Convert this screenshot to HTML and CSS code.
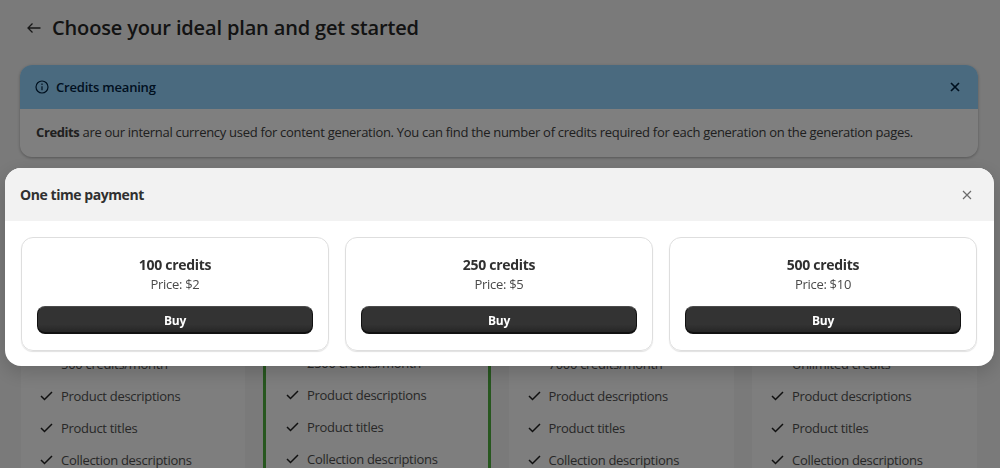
FILE: index.html
```html
<!DOCTYPE html>
<html lang="en">
<head>
<meta charset="utf-8">
<title>Choose your ideal plan</title>
<link rel="stylesheet" href="styles.css">
</head>
<body>
<main class="page">
  <header class="page-head">
    <svg class="back" width="16" height="12" viewBox="0 0 16 12"><path d="M14.5 6H2M6.5 1.5 2 6l4.500 4.500" fill="none" stroke="currentColor" stroke-width="1.300"/></svg>
    <h1>Choose your ideal plan and get started</h1>
  </header>
  <section class="alert">
    <div class="alert-head">
      <svg class="info" width="14" height="14" viewBox="0 0 14 14"><circle cx="7" cy="7" r="6" fill="none" stroke="currentColor" stroke-width="1.200"/><path d="M7 6.200v4M7 3.600v1.300" stroke="currentColor" stroke-width="1.200"/></svg>
      <strong class="alert-title">Credits meaning</strong>
      <svg class="alert-close" width="10" height="10" viewBox="0 0 10 10"><path d="M1 1l8 8M9 1 1 9" stroke="currentColor" stroke-width="1.700"/></svg>
    </div>
    <p class="alert-body"><b>Credits</b> are our internal currency used for content generation. You can find the number of credits required for each generation on the generation pages.</p>
  </section>
  <section class="plans">
    <article class="plan">
      <ul>
        <li><span class="check-slot"></span>500 credits/month</li>
        <li><svg class="check" width="13" height="10" viewBox="0 0 13 10"><path d="M1 5l3.500 3.500L12 1" fill="none" stroke="currentColor" stroke-width="1.500"/></svg>Product descriptions</li>
        <li><svg class="check" width="13" height="10" viewBox="0 0 13 10"><path d="M1 5l3.500 3.500L12 1" fill="none" stroke="currentColor" stroke-width="1.500"/></svg>Product titles</li>
        <li><svg class="check" width="13" height="10" viewBox="0 0 13 10"><path d="M1 5l3.500 3.500L12 1" fill="none" stroke="currentColor" stroke-width="1.500"/></svg>Collection descriptions</li>
      </ul>
    </article>
    <article class="plan plan-featured">
      <ul>
        <li><span class="check-slot"></span>2500 credits/month</li>
        <li><svg class="check" width="13" height="10" viewBox="0 0 13 10"><path d="M1 5l3.500 3.500L12 1" fill="none" stroke="currentColor" stroke-width="1.500"/></svg>Product descriptions</li>
        <li><svg class="check" width="13" height="10" viewBox="0 0 13 10"><path d="M1 5l3.500 3.500L12 1" fill="none" stroke="currentColor" stroke-width="1.500"/></svg>Product titles</li>
        <li><svg class="check" width="13" height="10" viewBox="0 0 13 10"><path d="M1 5l3.500 3.500L12 1" fill="none" stroke="currentColor" stroke-width="1.500"/></svg>Collection descriptions</li>
      </ul>
    </article>
    <article class="plan">
      <ul>
        <li><span class="check-slot"></span>7000 credits/month</li>
        <li><svg class="check" width="13" height="10" viewBox="0 0 13 10"><path d="M1 5l3.500 3.500L12 1" fill="none" stroke="currentColor" stroke-width="1.500"/></svg>Product descriptions</li>
        <li><svg class="check" width="13" height="10" viewBox="0 0 13 10"><path d="M1 5l3.500 3.500L12 1" fill="none" stroke="currentColor" stroke-width="1.500"/></svg>Product titles</li>
        <li><svg class="check" width="13" height="10" viewBox="0 0 13 10"><path d="M1 5l3.500 3.500L12 1" fill="none" stroke="currentColor" stroke-width="1.500"/></svg>Collection descriptions</li>
      </ul>
    </article>
    <article class="plan">
      <ul>
        <li><span class="check-slot"></span>Unlimited credits</li>
        <li><svg class="check" width="13" height="10" viewBox="0 0 13 10"><path d="M1 5l3.500 3.500L12 1" fill="none" stroke="currentColor" stroke-width="1.500"/></svg>Product descriptions</li>
        <li><svg class="check" width="13" height="10" viewBox="0 0 13 10"><path d="M1 5l3.500 3.500L12 1" fill="none" stroke="currentColor" stroke-width="1.500"/></svg>Product titles</li>
        <li><svg class="check" width="13" height="10" viewBox="0 0 13 10"><path d="M1 5l3.500 3.500L12 1" fill="none" stroke="currentColor" stroke-width="1.500"/></svg>Collection descriptions</li>
      </ul>
    </article>
  </section>
</main>

<div class="overlay">
  <div class="modal">
    <div class="modal-head">
      <h2>One time payment</h2>
      <svg class="modal-close" width="10" height="10" viewBox="0 0 10 10"><path d="M1 1l8 8M9 1 1 9" stroke="currentColor" stroke-width="1.200"/></svg>
    </div>
    <div class="modal-body">
      <div class="offer">
        <div class="offer-name">100 credits</div>
        <div class="offer-price">Price: $2</div>
        <button class="buy" type="button">Buy</button>
      </div>
      <div class="offer">
        <div class="offer-name">250 credits</div>
        <div class="offer-price">Price: $5</div>
        <button class="buy" type="button">Buy</button>
      </div>
      <div class="offer">
        <div class="offer-name">500 credits</div>
        <div class="offer-price">Price: $10</div>
        <button class="buy" type="button">Buy</button>
      </div>
    </div>
  </div>
</div>
</body>
</html>
```

FILE: styles.css
```css
* { box-sizing: border-box; }
html, body { margin: 0; height: 100%; overflow: hidden; }
body {
  background: #f4f4f4;
  color: #404040;
  font-family: "Open Sans", "Noto Sans", sans-serif;
  font-size: 13px;
  letter-spacing: -0.295px;
}
.page { padding: 0 23px 0 20px; height: 468px; overflow: hidden; }
.page-head { display: flex; align-items: center; gap: 10px; height: 55px; padding-left: 6px; }
.back { color: #303030; }
h1 { margin: 0; font-size: 20px; font-weight: 600; color: #262626; letter-spacing: -0.15px; }
.alert {
  margin-top: 10px;
  width: 958px;
  border-radius: 12px;
  background: #fff;
  box-shadow: 0 1px 3px rgba(0,0,0,.3);
  overflow: hidden;
}
.alert-head {
  display: flex; align-items: center; gap: 7px;
  height: 44px; padding: 0 18px 0 15px;
  background: #95d5ff;
  color: #00213f;
}
.alert-title { font-size: 13px; font-weight: 600; letter-spacing: -0.2px; }
.alert-close { margin-left: auto; }
.alert-body { margin: 0; height: 48px; padding: 14px 16px 0; font-size: 13px; }
.alert-body b { font-weight: 700; letter-spacing: -0.4px; }
.plans {
  display: grid;
  grid-template-columns: 224px 227.5px 225.5px 225px;
  column-gap: 18px;
  margin: 18px 0 0 1px;
}
.plan {
  background: #fcfcfc;
  height: 300px;
  padding: 173px 0 0 19px;
  color: #505050;
}
.plan ul { list-style: none; margin: 0; padding: 0; }
.plan li { display: flex; align-items: center; gap: 8px; height: 32px; }
.plan-featured { border: solid #4fae3f; border-width: 0 3px; padding: 172px 0 0 20px; }
.check { flex: none; color: #202020; }
.check-slot { flex: none; width: 13px; }
.overlay {
  position: fixed; inset: 0;
  background: rgba(0,0,0,.5);
}
.modal {
  position: absolute;
  left: 5px; top: 168px;
  width: 989px; height: 198px;
  background: #fff;
  border-radius: 16px;
  box-shadow: 0 6px 20px rgba(0,0,0,.18);
  overflow: hidden;
}
.modal-head {
  display: flex; align-items: center; justify-content: space-between;
  height: 53px; padding: 0 22px 0 15px;
  background: #f2f2f2;
}
h2 { margin: 0; font-size: 14px; font-weight: 700; color: #303030; letter-spacing: -0.44px; }
.modal-close { color: #6b6b6b; }
.modal-body {
  display: grid;
  grid-template-columns: repeat(3, 308px);
  column-gap: 16px;
  padding: 16px;
}
.offer {
  height: 114px;
  padding: 17px 15px 0;
  border: 1px solid #dedede;
  border-radius: 12px;
  box-shadow: 0 1px 1px rgba(0,0,0,.12);
  text-align: center;
}
.offer-name { font-size: 14px; font-weight: 700; line-height: 20px; color: #303030; letter-spacing: -0.3px; }
.offer-price { font-size: 13px; line-height: 20px; color: #4a4a4a; margin-top: -1px; }
.buy {
  display: block; width: 100%; height: 28px;
  margin-top: 12px;
  padding: 1px 0 0;
  border: 1px solid #111;
  border-top-color: #4a4a4a;
  border-bottom-width: 2px;
  border-radius: 8px;
  background: linear-gradient(#333, #333 70%, #262626);
  color: #fff;
  font: 700 12px "Open Sans", "Noto Sans", sans-serif;
  letter-spacing: -0.2px;
}
```
